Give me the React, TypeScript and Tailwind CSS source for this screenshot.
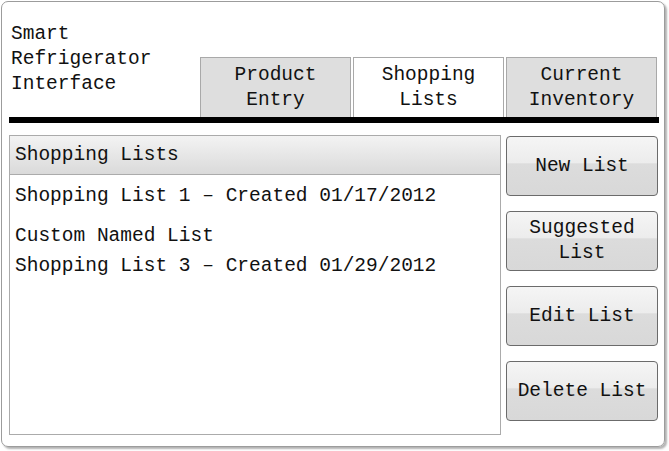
import React from 'react'

const tabs = [
  { label: ['Product', 'Entry'], active: false },
  { label: ['Shopping', 'Lists'], active: true },
  { label: ['Current', 'Inventory'], active: false },
]

const lists = [
  { name: 'Shopping List 1 – Created 01/17/2012', cls: '' },
  { name: 'Custom Named List', cls: 'mt-[10px]' },
  { name: 'Shopping List 3 – Created 01/29/2012', cls: '' },
]

const actions = [['New List'], ['Suggested', 'List'], ['Edit List'], ['Delete List']]

function App() {
  return (
    <div className="h-[451px] w-[669px] bg-white p-[1px] font-['Liberation_Mono',monospace] text-[19.5px] leading-[25px] text-[#111]">
      <div className="flex h-[446px] w-[664px] flex-col rounded-[7px] border border-[#9c9c9c] pl-[7px] pr-[5px] shadow-[2px_2px_2px_rgba(0,0,0,0.3)]">
        {/* Header */}
        <div className="flex h-[115px] items-end justify-between">
          <div className="self-start pl-[2px] pt-[20px]">
            <p>Smart</p>
            <p>Refrigerator</p>
            <p>Interface</p>
          </div>
          <div className="flex gap-[2px] pr-[2px]">
            {tabs.map((t) => (
              <div
                key={t.label[0]}
                className={`flex h-[60px] w-[151px] flex-col items-center justify-center border border-b-0 border-[#a9a9a9] ${
                  t.active ? 'bg-white' : 'bg-[#dedede]'
                }`}
              >
                {t.label.map((l) => (
                  <span key={l}>{l}</span>
                ))}
              </div>
            ))}
          </div>
        </div>
        <div className="h-[6px] w-full bg-black" />

        {/* Body */}
        <div className="mt-[12px] flex gap-[5px]">
          <div className="flex h-[300px] w-[492px] flex-col border border-[#ababab]">
            <div className="flex h-[39px] items-center border-b border-[#ababab] bg-[linear-gradient(to_bottom,#f3f3f3,#dadada)] pl-[5px]">
              Shopping Lists
            </div>
            <div className="pl-[5px] pt-[6px] leading-[30px]">
              {lists.map((l) => (
                <p key={l.name} className={l.cls}>
                  {l.name}
                </p>
              ))}
            </div>
          </div>

          <div className="mt-[1px] flex flex-col gap-[15px]">
            {actions.map((a) => (
              <button
                key={a[0]}
                className="flex h-[60px] w-[152px] flex-col items-center justify-center rounded-[4px] border border-[#6b6b6b] bg-[linear-gradient(to_bottom,#f5f5f5_0%,#ececec_45%,#dcdcdc_46%,#d8d8d8_100%)]"
              >
                {a.map((l) => (
                  <span key={l}>{l}</span>
                ))}
              </button>
            ))}
          </div>
        </div>
      </div>
    </div>
  )
}

export default App
